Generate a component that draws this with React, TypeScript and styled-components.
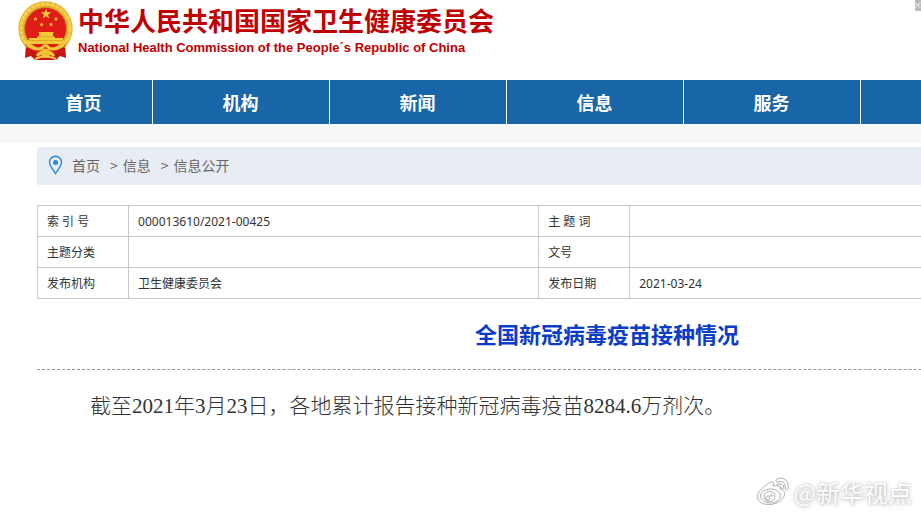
import React from "react";
import styled, { createGlobalStyle } from "styled-components";

const sans = `"Noto Sans CJK SC", sans-serif`;
const mixed = `"Noto Sans", "Noto Sans CJK SC", sans-serif`;

const GlobalStyle = createGlobalStyle`
  *, *::before, *::after { box-sizing: border-box; }
  body { margin: 0; background: #fff; font-family: ${sans}; }
`;

const Viewport = styled.div`
  position: relative;
  min-height: 100vh;
  overflow: hidden;
`;

const Page = styled.div`
  min-width: 1214px;
`;

const Header = styled.header`
  display: flex;
  align-items: flex-start;
  gap: 4px;
  height: 80px;
  padding: 1px 17px 0;
`;

const Names = styled.div`
  padding-top: 2px;
  color: #c00000;
`;

const SiteName = styled.div`
  font-size: 26px;
  line-height: 34px;
  font-weight: 700;
`;

const EnglishName = styled.div`
  margin-top: 1px;
  font: 700 13px/20px "Liberation Sans", Arial, sans-serif;
`;

const Nav = styled.nav`
  display: flex;
  height: 44px;
  padding-left: 16px;
  background: #1865a7;
`;

const NavLink = styled.a<{ $first?: boolean }>`
  flex: none;
  width: ${(p) => (p.$first ? 137 : 177)}px;
  padding-right: 1px;
  border-right: 1px solid #fff;
  color: #fff;
  font-size: 18px;
  line-height: 44px;
  font-weight: 700;
  text-align: center;
  text-decoration: none;
`;

const Band = styled.div`
  height: 19px;
  background: #f6f6f6;
`;

const Main = styled.main`
  padding: 4px 37px 0;
`;

const Crumbs = styled.nav`
  display: flex;
  align-items: center;
  height: 38px;
  padding: 0 11px 2px;
  border-radius: 2px;
  background: #e8edf5;
  color: #666;
  font-size: 14px;
  line-height: 20px;
`;

const CrumbLink = styled.a`
  color: inherit;
  text-decoration: none;
`;

const Separator = styled.span`
  padding: 0 5px 0 10px;
`;

const Pin = styled.svg`
  margin-right: 9px;
`;

const InfoTable = styled.table`
  width: 100%;
  margin-top: 20px;
  border-collapse: collapse;
  table-layout: fixed;
  color: #333;
  font: 12px/18px ${mixed};
`;

const Label = styled.th`
  width: 8%;
  height: 31px;
  padding: 2px 9px 0;
  border: 1px solid #c8c8c8;
  font-weight: 400;
  text-align: left;
`;

const Value = styled.td<{ $wide?: boolean }>`
  width: ${(p) => (p.$wide ? 48 : 36)}%;
  padding: 2px 9px 0;
  border: 1px solid #c8c8c8;
`;

const Title = styled.h1`
  margin: 0;
  padding: 18px 0 20px;
  border-bottom: 1px dashed #999;
  color: #0a3cc8;
  font-size: 22px;
  line-height: 32px;
  text-align: center;
`;

const Paragraph = styled.p`
  margin: 20px 0 0;
  padding-left: 53px;
  color: #333;
  font: 300 21px/32px "Liberation Serif", "Noto Sans CJK SC", serif;
`;

const CornerButton = styled.button`
  position: absolute;
  top: 0;
  right: 0;
  display: flex;
  width: 6px;
  height: 11px;
  padding: 0;
  overflow: hidden;
  border: 0;
  background: #bbb;
`;

const Watermark = styled.div`
  position: absolute;
  right: 9px;
  bottom: 6px;
  display: flex;
  align-items: center;
  gap: 3px;
  color: #fff;
  font-size: 24px;
  line-height: 36px;
  text-shadow: 0 0 2px #bbb, 1px 1px 4px #bbb;
`;

const star = (cx: number, cy: number, r: number) =>
  Array.from({ length: 10 }, (_, i) => {
    const a = (Math.PI / 5) * i - Math.PI / 2;
    const d = i % 2 ? r * 0.4 : r;
    return `${cx + d * Math.cos(a)},${cy + d * Math.sin(a)}`;
  }).join(" ");

const Emblem = () => (
  <svg width="57" height="60" viewBox="0 0 57 60" aria-hidden="true">
    <path d="M9 42 L8 57 L14 55 L18 59 H39 L43 55 L49 57 L48 42Z" fill="#c51712" />
    <circle cx="28.500" cy="27.500" r="27.200" fill="#e9b52f" />
    <circle cx="28.500" cy="27.500" r="24.500" fill="none" stroke="#f5d052" strokeWidth="3" strokeDasharray="4 1" />
    <circle cx="28.500" cy="27.500" r="21" fill="#df1c18" stroke="#c88c1e" />
    <g fill="#f4cb37">
      <polygon points={star(29, 13, 5.5)} />
      <polygon points={star(18.5, 18, 2.5)} />
      <polygon points={star(39, 18, 2.5)} />
      <polygon points={star(24.5, 23.5, 2.5)} />
      <polygon points={star(34, 23.5, 2.5)} />
      <path d="M21 32 L22 31 H36 L37 32 H36 V35 H37 L38 37 H46 V39 H47 L48 43 H10 L11 39 H12 V37 H20 L21 35 H22 V32Z" />
    </g>
    <path d="M21 35.500 H37 M12 39.500 H46" stroke="#d79c24" strokeWidth=".7" />
    <path d="M8 43 Q20 53 28.500 47 Q37 53 49 43 L45 51 Q37 56 33 53 Q28.500 48 24 53 Q20 56 12 51Z" fill="#d91b17" />
    <path d="M10 44 Q20 50 25 47 Q28.500 42 32 47 Q37 50 47 44 M20 55 Q28.500 45 37 55" fill="none" stroke="#f3c83c" strokeWidth="3" />
    <circle cx="28.500" cy="52" r="4.500" fill="#efbd30" />
    <path d="M10 47 L18 53 L16 56 M47 47 L39 53 L41 56" fill="none" stroke="#a50e0c" />
    <path d="M18 58 Q28.500 53 39 58" fill="none" stroke="#f2cc46" strokeWidth="2" />
  </svg>
);

const WeiboMark = () => (
  <svg width="34" height="30" viewBox="0 0 34 30" fill="#fff" stroke="#999" strokeWidth=".8" aria-hidden="true">
    <path d="M12 7 C16 3 19 5 17 9 C22 7 26 8 24 12 C29 13 30 17 27 21 C22 29 5 30 2 22 C0 17 5 11 12 7Z" />
    <ellipse cx="14.500" cy="19" rx="10" ry="7" />
    <ellipse cx="13.500" cy="19.500" rx="5.500" ry="5" />
    <circle cx="12" cy="21" r="2.200" />
    <circle cx="15.500" cy="18.500" r=".8" />
    <path d="M21 2 C28 -1 34 5 32 12 C31 14 29 13 29 11 C30 6 26 3 22 5 C20 5 19 3 21 2Z" />
    <path d="M22 7 C26 6 29 9 27 12 C26 13 25 12 25 11 C25 9 24 9 22 9 C21 9 21 7 22 7Z" />
  </svg>
);

const navItems = ["首页", "机构", "新闻", "信息", "服务", ""];
const crumbs = ["首页", "信息", "信息公开"];
const rows = [
  ["索 引 号", "000013610/2021-00425", "主 题 词", ""],
  ["主题分类", "", "文号", ""],
  ["发布机构", "卫生健康委员会", "发布日期", "2021-03-24"],
];

export default function App() {
  return (
    <>
      <GlobalStyle />
      <Viewport>
        <Page>
          <Header>
            <Emblem />
            <Names>
              <SiteName>中华人民共和国国家卫生健康委员会</SiteName>
              <EnglishName>National Health Commission of the People´s Republic of China</EnglishName>
            </Names>
          </Header>
          <Nav>
            {navItems.map((item, i) => (
              <NavLink key={i} href="#" $first={i === 0}>{item}</NavLink>
            ))}
          </Nav>
          <Band />
          <Main>
            <Crumbs>
              <Pin width="15" height="20" viewBox="0 0 15 20" aria-hidden="true">
                <path d="M7.500 18.500 C5 14.500 1.500 11 1.500 7.300 A6 6 0 0 1 13.500 7.300 C13.500 11 10 14.500 7.500 18.500Z" fill="none" stroke="#2b86d9" strokeWidth="1.400" />
                <circle cx="7.500" cy="7.500" r="2.500" fill="#2b86d9" />
              </Pin>
              {crumbs.map((item, i) => (
                <React.Fragment key={item}>
                  {i > 0 && <Separator>&gt;</Separator>}
                  <CrumbLink href="#">{item}</CrumbLink>
                </React.Fragment>
              ))}
            </Crumbs>
            <InfoTable>
              <tbody>
                {rows.map((r) => (
                  <tr key={r[0]}>
                    <Label scope="row">{r[0]}</Label>
                    <Value>{r[1]}</Value>
                    <Label scope="row">{r[2]}</Label>
                    <Value $wide>{r[3]}</Value>
                  </tr>
                ))}
              </tbody>
            </InfoTable>
            <Title>全国新冠病毒疫苗接种情况</Title>
            <Paragraph>截至2021年3月23日，各地累计报告接种新冠病毒疫苗8284.6万剂次。</Paragraph>
          </Main>
        </Page>
        <CornerButton type="button" aria-label="关闭">
          <svg width="11" height="11" viewBox="0 0 11 11" aria-hidden="true">
            <path d="M0 0 L5 5 L0 10 M10 0 L5 5 L10 10" fill="none" stroke="#fff" strokeWidth="1.500" />
          </svg>
        </CornerButton>
        <Watermark>
          <WeiboMark />
          <span>@新华视点</span>
        </Watermark>
      </Viewport>
    </>
  );
}
